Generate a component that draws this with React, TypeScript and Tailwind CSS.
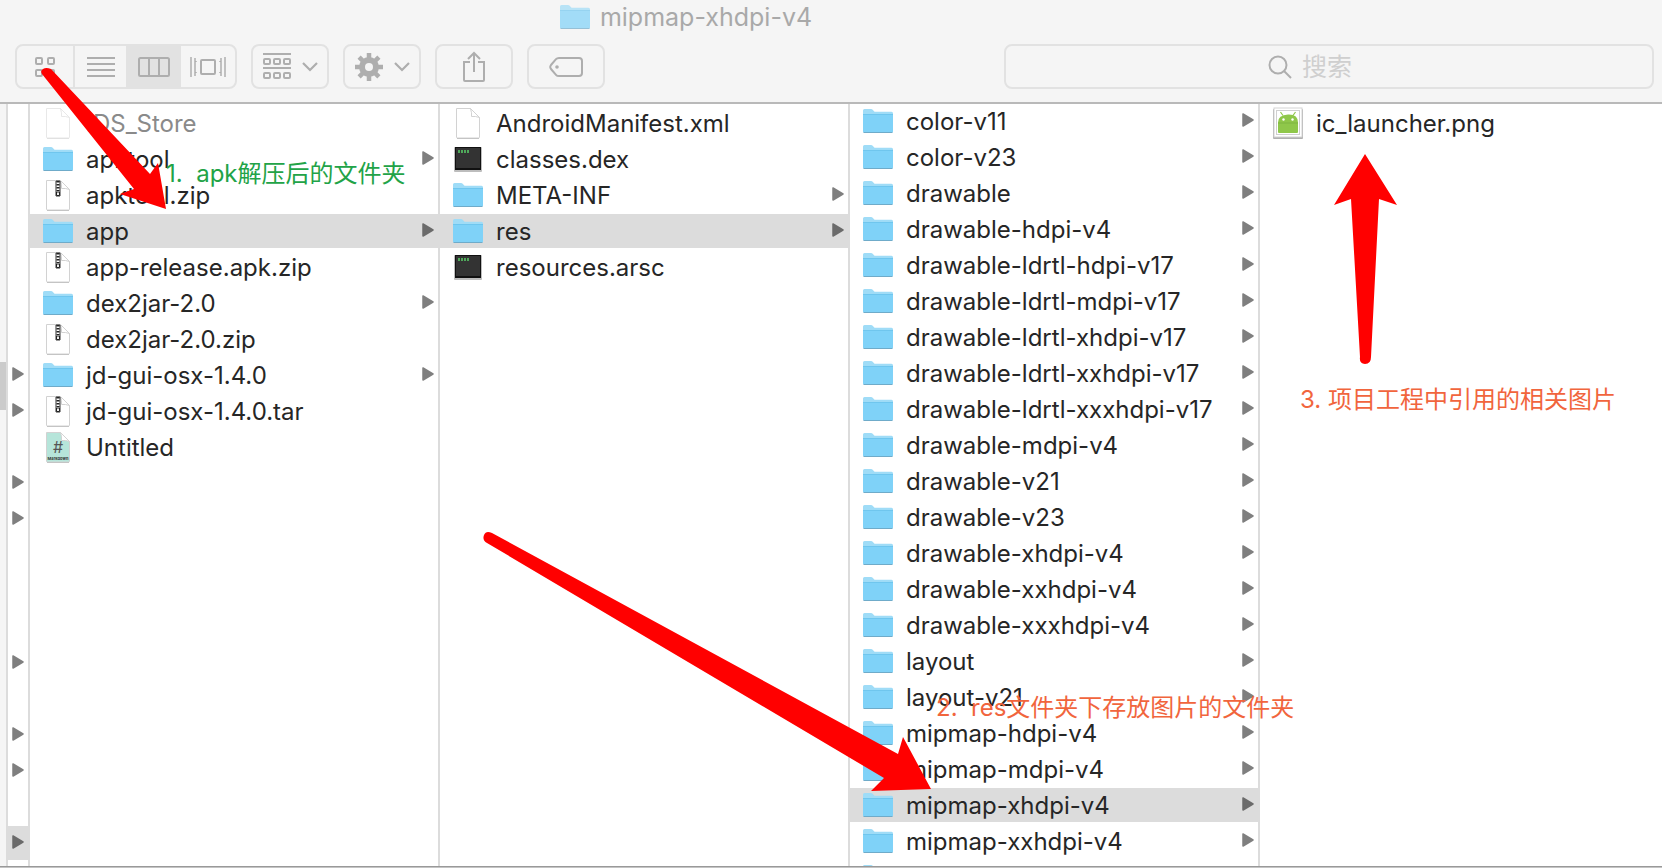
import type { ReactNode } from "react";

type Kind = "folder" | "file" | "zip" | "exec" | "markdown" | "image";

interface Item {
    name: string;
    kind: Kind;
    selected?: boolean;
    hidden?: boolean;
}

const folder = (name: string, selected = false): Item => ({ name, kind: "folder", selected });

const appFiles: Item[] = [
    { name: ".DS_Store", kind: "file", hidden: true },
    folder("apktool"),
    { name: "apktool.zip", kind: "zip" },
    folder("app", true),
    { name: "app-release.apk.zip", kind: "zip" },
    folder("dex2jar-2.0"),
    { name: "dex2jar-2.0.zip", kind: "zip" },
    folder("jd-gui-osx-1.4.0"),
    { name: "jd-gui-osx-1.4.0.tar", kind: "zip" },
    { name: "Untitled", kind: "markdown" },
];

const apkFiles: Item[] = [
    { name: "AndroidManifest.xml", kind: "file" },
    { name: "classes.dex", kind: "exec" },
    folder("META-INF"),
    folder("res", true),
    { name: "resources.arsc", kind: "exec" },
];

const resFiles: Item[] = [
    folder("color-v11"),
    folder("color-v23"),
    folder("drawable"),
    folder("drawable-hdpi-v4"),
    folder("drawable-ldrtl-hdpi-v17"),
    folder("drawable-ldrtl-mdpi-v17"),
    folder("drawable-ldrtl-xhdpi-v17"),
    folder("drawable-ldrtl-xxhdpi-v17"),
    folder("drawable-ldrtl-xxxhdpi-v17"),
    folder("drawable-mdpi-v4"),
    folder("drawable-v21"),
    folder("drawable-v23"),
    folder("drawable-xhdpi-v4"),
    folder("drawable-xxhdpi-v4"),
    folder("drawable-xxxhdpi-v4"),
    folder("layout"),
    folder("layout-v21"),
    folder("mipmap-hdpi-v4"),
    folder("mipmap-mdpi-v4"),
    folder("mipmap-xhdpi-v4", true),
    folder("mipmap-xxhdpi-v4"),
    folder("mipmap-xxxhdpi-v4"),
];

// rows of the parent column that hold a folder
const parentFolders = [7, 8, 10, 11, 15, 17, 18, 20];

function FolderIcon() {
    return (
        <svg width="30" height="26" viewBox="0 0 30 26" aria-hidden="true">
            <path d="M0 24V2.5Q0 1 1.5 1H8q1 0 1.700 .8L11 3.200q.5 .6 1.500 .6h16Q30 3.800 30 5.300V24Z" fill="#9fdcf7" />
            <path d="M0 6.500h30V23q0 1.500-1.500 1.500h-27Q0 24.500 0 23Z" fill="#7fd2f8" />
            <path d="M0 6.500h30" stroke="#6fc6ee" />
            <path d="M.5 24.500h29" stroke="#6fabc9" />
        </svg>
    );
}

function Page({ fill = "#fff", children }: { fill?: string; children?: ReactNode }) {
    return (
        <svg width="26" height="32" viewBox="0 0 26 32" aria-hidden="true">
            <path d="M1.500 1.500h14l9 9v19.500q0 1-1 1h-21q-1 0-1-1z" fill={fill} stroke="#d2d2d2" />
            <path d="M2 31.500h22" stroke="#c4c4c4" />
            <path d="M15.500 1.500q1.500 4.500 1 8 4-.5 8 1z" fill="#fff" stroke="#d2d2d2" />
            {children}
        </svg>
    );
}

function ItemIcon({ kind }: { kind: Kind }) {
    if (kind === "folder") return <FolderIcon />;
    if (kind === "file") return <Page />;
    if (kind === "zip")
        return (
            <Page>
                <path d="M11 2h4v15h-4z" fill="#fff" stroke="#333" strokeWidth="1" />
                <path d="M13 2v10" stroke="#222" strokeWidth="3" strokeDasharray="1.500 1.500" />
                <path d="M11.500 13h3v3.500h-3z" fill="#eee" stroke="#222" />
            </Page>
        );
    if (kind === "markdown")
        return (
            <Page fill="#b6e5da">
                <text x="13" y="22" textAnchor="middle" fontSize="16" fontFamily="Inter, sans-serif" fill="#555">#</text>
                <text x="13" y="29" textAnchor="middle" fontSize="4" fontFamily="Inter, sans-serif" fontWeight="700" fill="#333">Markdown</text>
            </Page>
        );
    if (kind === "exec")
        return (
            <svg width="28" height="26" viewBox="0 0 28 26" aria-hidden="true">
                <rect x="0" y="1" width="28" height="25" rx="1" fill="#bdbdbd" />
                <rect x="1" y="1" width="26" height="23" fill="#111" />
                <rect x="2" y="2" width="24" height="20" fill="#333" />
                <path d="M4 5.500h11" stroke="#4fa85a" strokeWidth="3" strokeDasharray="2 1" />
            </svg>
        );
    return (
        <svg width="30" height="32" viewBox="0 0 30 32" aria-hidden="true">
            <rect x="0" y="2" width="30" height="30" rx="1" fill="#b0b0b0" />
            <rect x="1" y="1" width="28" height="29" fill="#fff" stroke="#d4d4d4" />
            <rect x="3.500" y="3.500" width="23" height="24" fill="#fff" stroke="#d0d0d0" />
            <path d="M5 15.500Q5 8 15 7.500T25 15.500zM5 15.500h20v9.500q0 1-1 1H6q-1 0-1-1z" fill="#8fc74a" />
            <path d="M5 16h20" stroke="#7fb541" />
            <path d="M10 8.500 7.500 5M20 8.500 22.500 5" stroke="#8fc74a" strokeWidth="1.200" />
            <circle cx="10.500" cy="12.500" r="1.200" fill="#fff" />
            <circle cx="19.500" cy="12.500" r="1.200" fill="#fff" />
        </svg>
    );
}

function Triangle({ dark = false }: { dark?: boolean }) {
    return (
        <svg width="12" height="14" viewBox="0 0 12 14" className="mb-0.5 shrink-0" aria-hidden="true">
            <path d="M1 1v12l10-6z" fill={dark ? "#6b6b6b" : "#7f7f7f"} stroke={dark ? "#6b6b6b" : "#7f7f7f"} strokeWidth="1.500" strokeLinejoin="round" />
        </svg>
    );
}

function Row({ item }: { item: Item }) {
    return (
        <li>
            <button type="button" className={`flex h-[34px] w-full items-center gap-[13px] pr-1 pl-[13px] text-left ${item.selected ? "bg-[#dcdcdc]" : ""}`}>
                <span className={`flex w-[30px] shrink-0 justify-center ${item.hidden ? "opacity-50" : ""}`}>
                    <ItemIcon kind={item.kind} />
                </span>
                <span className={`flex-1 pt-0.5 whitespace-nowrap ${item.hidden ? "text-[#8a8a8a]" : "text-[#262626]"}`}>{item.name}</span>
                {item.kind === "folder" && <Triangle dark={item.selected} />}
            </button>
        </li>
    );
}

function Column({ items, className }: { items: Item[]; className: string }) {
    return <ul className={`flex flex-col gap-0.5 overflow-hidden ${className}`}>{items.map((item) => <Row key={item.name} item={item} />)}</ul>;
}

function ToolButton({ label, children }: { label: string; children: ReactNode }) {
    return (
        <button type="button" aria-label={label} className="flex h-[45px] w-[78px] shrink-0 items-center justify-center gap-[11px] rounded-lg border-2 border-[#e2e2e2] text-[#aeaeae]">
            {children}
        </button>
    );
}

function Chevron() {
    return (
        <svg width="16" height="10" viewBox="0 0 16 10" fill="none" stroke="currentColor" strokeWidth="2.200" aria-hidden="true">
            <path d="m1 1 7 7 7-7" />
        </svg>
    );
}

function Toolbar() {
    return (
        <div className="flex items-center gap-[14px] pr-2 pl-[15px]">
            <div className="flex h-[45px] w-[222px] shrink-0 overflow-hidden rounded-lg border-2 border-[#e2e2e2] text-[#aeaeae]">
                <button type="button" aria-label="Icon view" className="flex w-[58px] items-center justify-center border-r-2 border-[#e2e2e2]">
                    <svg width="20" height="20" viewBox="0 0 20 20" fill="none" stroke="currentColor" strokeWidth="2" aria-hidden="true">
                        <rect x="1" y="1" width="6" height="6" rx="1" />
                        <rect x="13" y="1" width="6" height="6" rx="1" />
                        <rect x="1" y="13" width="6" height="6" rx="1" />
                        <rect x="13" y="13" width="6" height="6" rx="1" />
                    </svg>
                </button>
                <button type="button" aria-label="List view" className="flex flex-1 items-center justify-center">
                    <svg width="28" height="22" viewBox="0 0 28 22" stroke="currentColor" strokeWidth="2" aria-hidden="true">
                        <path d="M0 2h28M0 8h28M0 14h28M0 20h28" />
                    </svg>
                </button>
                <button type="button" aria-label="Column view" className="flex w-[55px] items-center justify-center bg-[#e2e2e2]">
                    <svg width="32" height="20" viewBox="0 0 32 20" fill="none" stroke="currentColor" strokeWidth="2" aria-hidden="true">
                        <rect x="1" y="1" width="30" height="18" rx="1.500" />
                        <path d="M11 1v18M21 1v18" />
                    </svg>
                </button>
                <button type="button" aria-label="Cover flow view" className="flex w-[54px] items-center justify-center">
                    <svg width="36" height="20" viewBox="0 0 36 20" fill="none" stroke="currentColor" strokeWidth="1.500" aria-hidden="true">
                        <path d="M1 0v20M35 0v20M5 1v18M31 1v18M6 4v1M6 15v1M30 4v1M30 15v1" />
                        <rect x="11" y="3" width="14" height="14" rx="1" strokeWidth="2" />
                    </svg>
                </button>
            </div>
            <ToolButton label="Arrange">
                <svg width="28" height="28" viewBox="1 0 28 28" fill="none" stroke="currentColor" strokeWidth="2" aria-hidden="true">
                    <path d="M1 1h28M1 15h28" />
                    <rect x="2" y="6" width="6" height="5" rx="1" />
                    <rect x="12" y="6" width="6" height="5" rx="1" />
                    <rect x="22" y="6" width="6" height="5" rx="1" />
                    <rect x="2" y="20" width="6" height="5" rx="1" />
                    <rect x="12" y="20" width="6" height="5" rx="1" />
                    <rect x="22" y="20" width="6" height="5" rx="1" />
                </svg>
                <Chevron />
            </ToolButton>
            <ToolButton label="Action">
                <svg width="28" height="28" viewBox="0 0 28 28" fill="none" stroke="currentColor" aria-hidden="true">
                    <circle cx="14" cy="14" r="7" strokeWidth="6" />
                    <path d="M14 0v28M0 14h28M4.100 4.100l19.800 19.800M23.900 4.100 4.100 23.900" strokeWidth="4.500" />
                    <circle cx="14" cy="14" r="4" fill="#f5f5f5" stroke="none" />
                </svg>
                <Chevron />
            </ToolButton>
            <ToolButton label="Share">
                <svg width="22" height="32" viewBox="0 0 22 32" fill="none" stroke="currentColor" strokeWidth="2" aria-hidden="true">
                    <path d="M7 11H1v18q0 1 1 1h18q1 0 1-1V11h-6M11 21V2M5 8l6-6 6 6" />
                </svg>
            </ToolButton>
            <ToolButton label="Edit tags">
                <svg width="34" height="20" viewBox="0 0 34 20" fill="none" stroke="currentColor" strokeWidth="2" aria-hidden="true">
                    <path d="M10 1h20q3 0 3 3v12q0 3-3 3H10q-2 0-3-1.200L2 12q-1.500-2 0-4l5-5.800Q8 1 10 1z" />
                    <circle cx="8" cy="10" r="1.800" fill="currentColor" stroke="none" />
                </svg>
            </ToolButton>
            <label className="ml-[385px] flex h-[45px] min-w-0 flex-1 items-center gap-[10px] rounded-lg border-2 border-[#e2e2e2] pl-[262px] text-[#aeaeae]">
                <svg width="24" height="24" viewBox="0 0 24 24" fill="none" stroke="currentColor" strokeWidth="2" className="shrink-0" aria-hidden="true">
                    <circle cx="10" cy="10" r="8.500" />
                    <path d="m16 16 7 7" />
                </svg>
                <input type="search" aria-label="搜索" placeholder="搜索" className="min-w-0 flex-1 bg-transparent text-[25px] outline-none placeholder:text-[#cfcfcf]" />
            </label>
        </div>
    );
}

export default function App() {
    return (
        <div className="relative flex h-screen flex-col overflow-hidden bg-white font-['Inter','Noto_Sans_CJK_SC',sans-serif] text-2xl leading-8">
            <header className="shrink-0 border-b-2 border-[#b9b9b9] bg-[#f5f5f5] pb-[13px]">
                <h1 className="mb-[10px] flex h-[34px] items-center justify-center gap-[10px] pr-[290px] text-[25px] text-[#a9a9a9]">
                    <span className="opacity-70"><FolderIcon /></span>
                    mipmap-xhdpi-v4
                </h1>
                <Toolbar />
            </header>

            <main className="flex min-h-0 flex-1">
                <div className="w-2 shrink-0 border-r-2 border-[#dcdcdc] bg-[#f5f5f5] pt-[258px]">
                    <div className="h-12 bg-[#cbcbcb]" />
                </div>
                <ul className="flex w-[22px] shrink-0 flex-col gap-0.5 overflow-hidden border-r-2 border-[#dcdcdc] pt-0.5">
                    {Array.from({ length: 21 }, (_, i) => (
                        <li key={i} className={`flex h-[34px] shrink-0 items-center pl-1 ${i === 20 ? "bg-[#dcdcdc]" : ""}`}>
                            {parentFolders.includes(i) && <Triangle dark={i === 20} />}
                        </li>
                    ))}
                </ul>
                <Column items={appFiles} className="w-[410px] shrink-0 border-r-2 border-[#dcdcdc] pt-0.5" />
                <Column items={apkFiles} className="w-[410px] shrink-0 border-r-2 border-[#dcdcdc] pt-0.5" />
                <Column items={resFiles} className="w-[410px] shrink-0 border-r-2 border-[#dcdcdc]" />
                <Column items={[{ name: "ic_launcher.png", kind: "image" }]} className="flex-1 pt-0.5" />
            </main>
            <div className="h-0.5 shrink-0 border-t border-[#999] bg-[#c4c4c4]" />

            {/* notes and arrows drawn over the window */}
            <svg width="130" height="145" viewBox="40 66 130 145" className="pointer-events-none absolute top-[66px] left-10" aria-hidden="true">
                <path d="M42 74Q40 71 43 69T51 69L150 174 158 163 166 209 120 194 134 189Z" fill="#f00" />
            </svg>
            <svg width="452" height="264" viewBox="482 530 452 264" className="pointer-events-none absolute top-[530px] left-[482px]" aria-hidden="true">
                <path d="M487 543Q482 540 484 535T492 533L898 754 903 737 931 789 871 791 884 778Z" fill="#f00" />
            </svg>
            <svg width="66" height="214" viewBox="1332 152 66 214" className="pointer-events-none absolute top-[152px] left-[1332px]" aria-hidden="true">
                <path d="M1365 154 1397 205 1379 199 1371 357Q1371 364 1365 364T1360 357L1351 199 1334 205Z" fill="#f00" />
            </svg>
            <p className="absolute top-[158px] left-[166px] whitespace-pre text-[#22a347]">1.  apk解压后的文件夹</p>
            <p className="absolute top-[692px] left-[936px] whitespace-pre text-[#f1653d]">2.  res文件夹下存放图片的文件夹</p>
            <p className="absolute top-[384px] left-[1300px] whitespace-pre text-[#f1653d]">3. 项目工程中引用的相关图片</p>
        </div>
    );
}
